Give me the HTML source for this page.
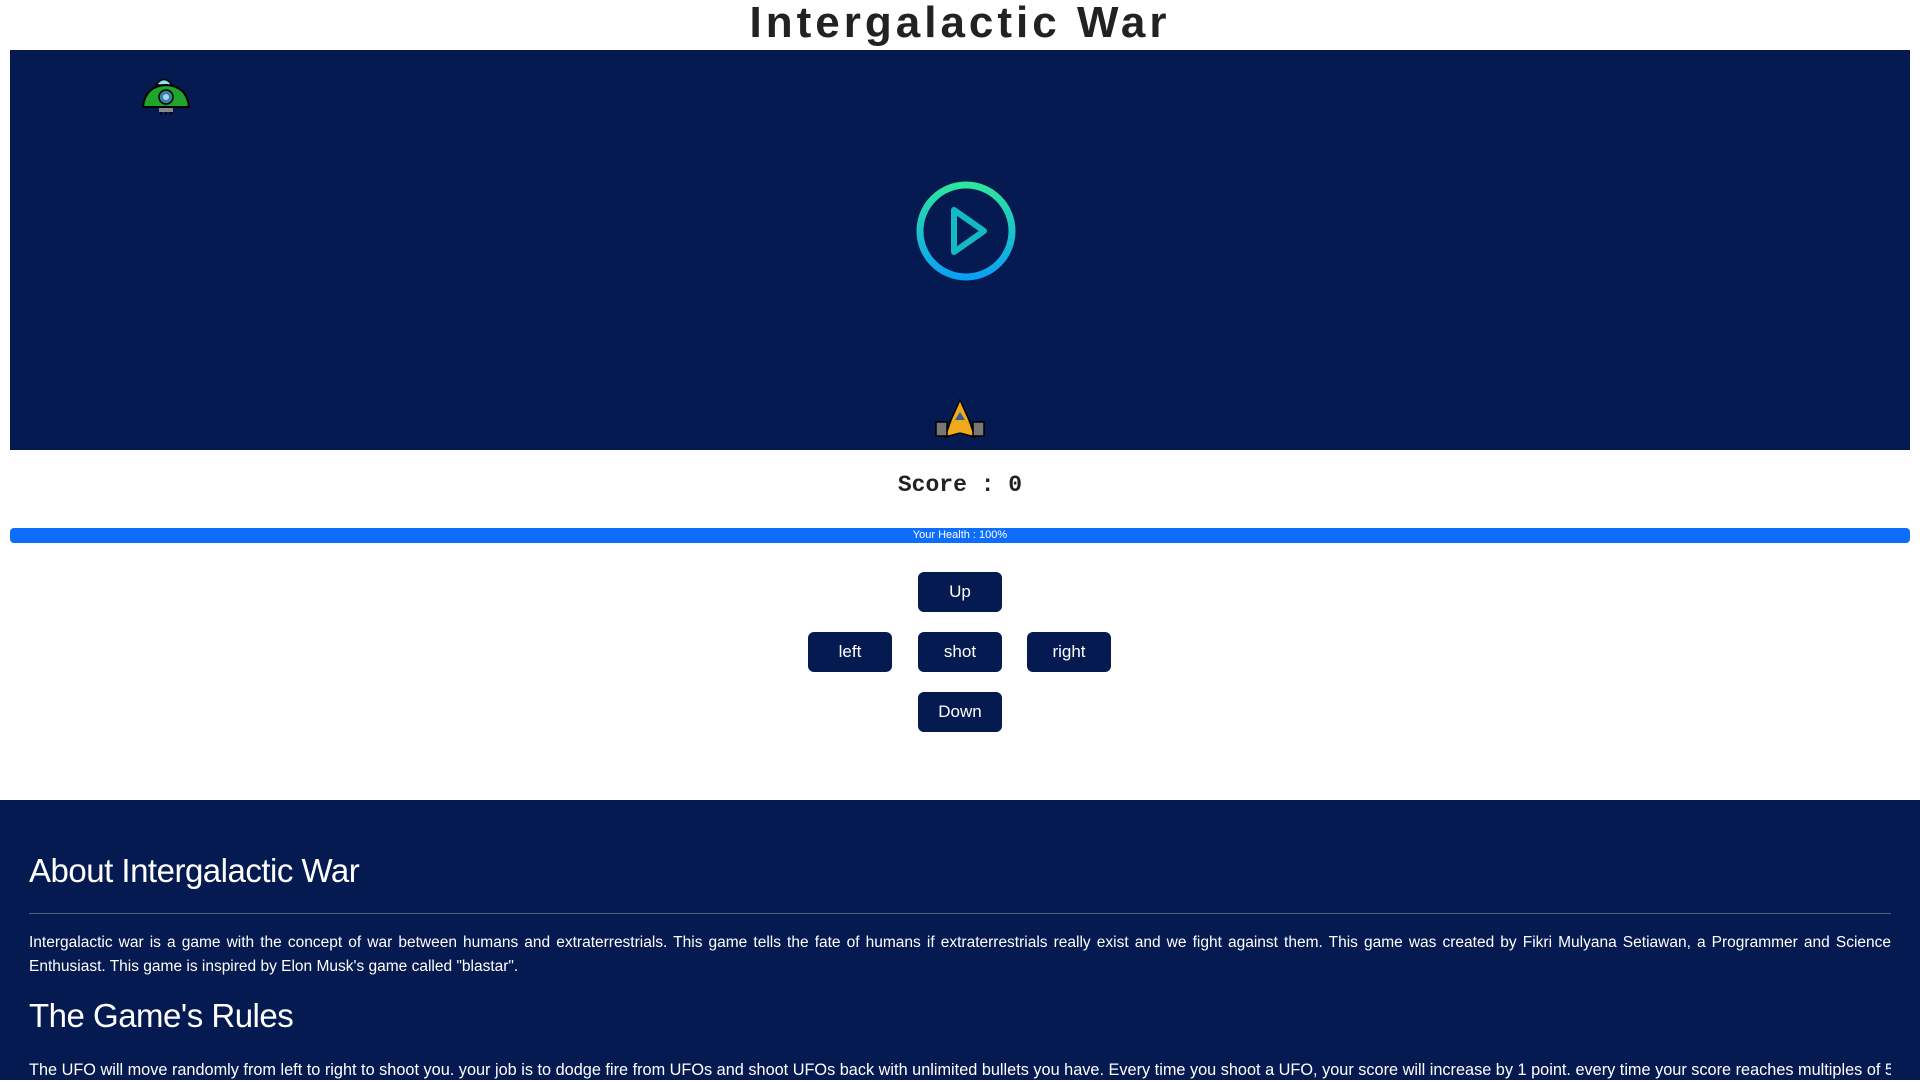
<!DOCTYPE html>
<html><head><meta charset="utf-8"><style>
*{margin:0;padding:0;box-sizing:border-box}
body{width:1920px;height:1080px;overflow:hidden;background:#fff;font-family:"Liberation Sans",sans-serif}
h1{position:absolute;left:0;width:1920px;top:0;text-align:center;font-size:44px;line-height:46px;font-weight:bold;color:#222;letter-spacing:4px}
#game{position:absolute;left:10px;top:50px;width:1900px;height:400px;background:#051a50}
#score{position:absolute;left:0;width:1920px;top:472px;text-align:center;font-family:"Liberation Mono",monospace;font-weight:bold;font-size:23px;color:#222}
#hb{position:absolute;left:10px;top:528px;width:1900px;height:15px;background:#0d6efd;border-radius:4px;color:#fff;font-size:11px;line-height:15px;text-align:center}
.b{position:absolute;width:84px;height:40px;background:#051a50;color:#fff;border-radius:6px;font-size:17px;line-height:40px;text-align:center}
#foot{position:absolute;left:0;top:800px;width:1920px;height:280px;background:#051a50;color:#fff}
h2{position:absolute;left:29px;font-weight:normal;font-size:33px;color:#fff;white-space:nowrap;letter-spacing:-0.5px}
hr{position:absolute;left:29px;width:1862px;top:913px;border:0;border-top:1px solid #55607f}
p{position:absolute;left:29px;width:1862px;font-size:15.5px;line-height:24px;text-align:justify}
</style></head><body>
<h1>Intergalactic War</h1>
<div id="game">
<svg width="1900" height="400" style="position:absolute;left:0;top:0">
<defs><linearGradient id="g" x1="0" y1="0" x2="0" y2="1"><stop offset="0" stop-color="#2ee59d"/><stop offset="1" stop-color="#0aa0f5"/></linearGradient></defs>
<circle cx="956" cy="181" r="46" fill="none" stroke="url(#g)" stroke-width="7"/>
<path d="M944 160 L944 202 L974 181 Z" fill="none" stroke="#13b9c4" stroke-width="6" stroke-linejoin="round"/>
<g transform="translate(-10,-50)">
<path d="M156 85 Q164 74 172 85 Z" fill="#8ee0f5" stroke="#000" stroke-width="1.5"/>
<path d="M143 107 Q145 86 166 85 Q187 86 189 107 Z" fill="#1fa52b" stroke="#000" stroke-width="2"/>
<circle cx="166" cy="97" r="7" fill="#3a7fa8" stroke="#000" stroke-width="1.5"/><circle cx="166" cy="97" r="3" fill="#9fd8ee"/>
<rect x="159" y="108" width="14" height="4" fill="#888"/><path d="M161 112v3M166 112v3M171 112v3" stroke="#000" stroke-width="1.5"/>
<path d="M960 400 L969 420 L975 437 L960 433 L945 437 L951 420 Z" fill="#f0a81c" stroke="#000" stroke-width="1.5"/>
<path d="M955 420 L960 412 L965 420 Z" fill="#3a5a9a"/>
<rect x="936" y="422" width="11" height="14" fill="#777" stroke="#000" stroke-width="1.5"/>
<rect x="973" y="422" width="11" height="14" fill="#777" stroke="#000" stroke-width="1.5"/>
</g>
</svg>
</div>
<div id="score">Score : 0</div>
<div id="hb">Your Health : 100%</div>
<div class="b" style="left:918px;top:572px">Up</div>
<div class="b" style="left:808px;top:632px">left</div>
<div class="b" style="left:918px;top:632px">shot</div>
<div class="b" style="left:1027px;top:632px">right</div>
<div class="b" style="left:918px;top:692px">Down</div>
<div id="foot"></div>
<div style="position:absolute;left:0;top:0;color:#fff">
<h2 style="top:852px">About Intergalactic War</h2>
<hr>
<p style="top:931px">Intergalactic war is a game with the concept of war between humans and extraterrestrials. This game tells the fate of humans if extraterrestrials really exist and we fight against them. This game was created by Fikri Mulyana Setiawan, a Programmer and Science Enthusiast. This game is inspired by Elon Musk's game called "blastar".</p>
<h2 style="top:997px">The Game's Rules</h2>
<p style="top:1058px;white-space:nowrap;overflow:hidden;font-size:16.3px">The UFO will move randomly from left to right to shoot you. your job is to dodge fire from UFOs and shoot UFOs back with unlimited bullets you have. Every time you shoot a UFO, your score will increase by 1 point. every time your score reaches multiples of 5</p>
</div>
</body></html>
